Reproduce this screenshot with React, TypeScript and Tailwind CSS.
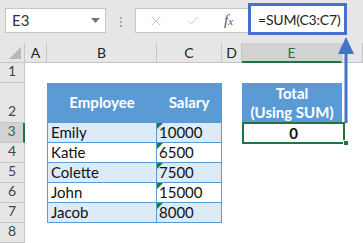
import React from "react";
import { X, Check } from "lucide-react";

const rows = [
  { name: "Emily", salary: "10000" },
  { name: "Katie", salary: "6500" },
  { name: "Colette", salary: "7500" },
  { name: "John", salary: "15000" },
  { name: "Jacob", salary: "8000" },
];

const colLetters = ["A", "B", "C", "D", "E", ""];

function RowHead({ n, active }: { n: number; active?: boolean }) {
  return (
    <div
      className={
        "flex items-end justify-center pb-[1px] text-[14px] border-b border-[#c6c6c6] " +
        (active
          ? "bg-[#d2d2d2] text-[#217346] border-r-2 border-r-[#217346]"
          : "bg-[#e6e6e6] text-[#444] border-r border-r-[#c6c6c6]")
      }
    >
      {n}
    </div>
  );
}

function GreenMark() {
  return (
    <svg className="absolute left-0 top-0" width="6" height="6" viewBox="0 0 6 6">
      <polygon points="0,0 6,0 0,6" fill="#1f7a35" />
    </svg>
  );
}

export default function App() {
  return (
    <div
      className="relative w-[363px] h-[243px] overflow-hidden bg-white"
      style={{ fontFamily: "Lato, 'Open Sans', sans-serif" }}
    >
      {/* formula bar */}
      <div className="flex h-[43px] bg-[#e6e6e6]">
        <div className="ml-[5px] mt-[8px] w-[101px] h-[25px] bg-white border border-[#c6c6c6] flex items-center justify-between pl-[6px] pr-[5px]">
          <span className="text-[15px] text-[#333]">E3</span>
          <svg width="9" height="5" viewBox="0 0 9 5">
            <polygon points="0,0 9,0 4.5,5" fill="#777" />
          </svg>
        </div>
        <div className="ml-[14px] mt-[17px] flex flex-col gap-[2px]">
          <div className="w-[2px] h-[2px] bg-[#aaa]" />
          <div className="w-[2px] h-[2px] bg-[#aaa]" />
          <div className="w-[2px] h-[2px] bg-[#aaa]" />
        </div>
        <div className="ml-[13px] mt-[8px] w-[114px] h-[25px] bg-white border border-[#c6c6c6] flex items-center pl-[12px]">
          <X size={16} strokeWidth={1.5} className="text-[#c4c4c4]" />
          <Check size={14} strokeWidth={1.6} className="ml-[22px] text-[#c4c4c4]" />
          <span
            className="ml-[24px] text-[15px] italic text-[#555]"
            style={{ fontFamily: "'Liberation Serif', serif" }}
          >
            f<span className="text-[11px]">x</span>
          </span>
        </div>
        <div className="-ml-[1px] mt-[3px] w-[99px] h-[32px] border-[3px] border-[#4472c4] bg-white flex items-center pl-[7px] text-[14px] tracking-[-0.2px] text-[#222] whitespace-nowrap">
          =SUM(C3:C7)
        </div>
      </div>

      {/* sheet */}
      <div
        className="grid grid-cols-[25px_22px_110px_65px_20px_100px_21px] grid-rows-[20px_20px_40px_repeat(6,20px)] text-[15px]"
      >
        {/* header row */}
        <div className="bg-[#e6e6e6] border-r border-b border-[#c6c6c6] flex items-end justify-end p-[3px]">
          <svg width="12" height="12" viewBox="0 0 12 12">
            <polygon points="12,0 12,12 0,12" fill="#b8b8b8" />
          </svg>
        </div>
        {colLetters.map((c, i) =>
          c === "E" ? (
            <div
              key={i}
              className="bg-[#d2d2d2] border-r border-[#c6c6c6] border-b-2 border-b-[#217346] flex items-center justify-center text-[14px] text-[#217346]"
            >
              {c}
            </div>
          ) : (
            <div
              key={i}
              className="bg-[#e6e6e6] border-r border-b border-[#c6c6c6] flex items-center justify-center text-[14px] text-[#222]"
            >
              {c}
            </div>
          )
        )}

        {/* row 1 */}
        <RowHead n={1} />
        <div className="col-span-6" />

        {/* row 2 */}
        <RowHead n={2} />
        <div />
        <div className="bg-[#5b9bd5] border-l border-r border-b border-[#5b9bd5] flex items-center justify-center text-white font-bold">
          Employee
        </div>
        <div className="bg-[#5b9bd5] border-r border-b border-[#5b9bd5] flex items-center justify-center text-white font-bold">
          Salary
        </div>
        <div />
        <div className="bg-[#5b9bd5] flex flex-col items-center justify-center text-white font-bold leading-[19px]">
          <span>Total</span>
          <span>(Using SUM)</span>
        </div>
        <div />

        {/* data rows */}
        {rows.map((r, i) => {
          const bg = i % 2 === 0 ? "bg-[#ddebf7]" : "bg-white";
          return (
            <React.Fragment key={r.name}>
              <RowHead n={i + 3} active={i === 0} />
              <div />
              <div className={`${bg} border-l border-r border-b border-[#5b9bd5] flex items-center pl-[3px] text-[#111]`}>
                {r.name}
              </div>
              <div className={`${bg} relative border-r border-b border-[#5b9bd5] flex items-center pl-[2px] text-[#111]`}>
                <GreenMark />
                {r.salary}
              </div>
              <div />
              {i === 0 ? (
                <div className="relative">
                  <div className="absolute -top-[1px] left-0 w-[103px] h-[22px] border-2 border-[#217346] flex items-center justify-center font-bold text-[#111]">
                    0
                  </div>
                  <div className="absolute top-[17px] left-[101px] w-[6px] h-[6px] bg-[#217346] border border-white" />
                </div>
              ) : (
                <div />
              )}
              <div />
            </React.Fragment>
          );
        })}

        {/* row 8 */}
        <RowHead n={8} />
        <div className="col-span-6" />
      </div>

      {/* arrow */}
      <svg className="absolute left-[336px] top-[35px]" width="20" height="90" viewBox="0 0 20 90">
        <rect x="8.5" y="16" width="3" height="72" fill="#4472c4" />
        <polygon points="10,2 2,19 18,19" fill="#4472c4" />
      </svg>
    </div>
  );
}
